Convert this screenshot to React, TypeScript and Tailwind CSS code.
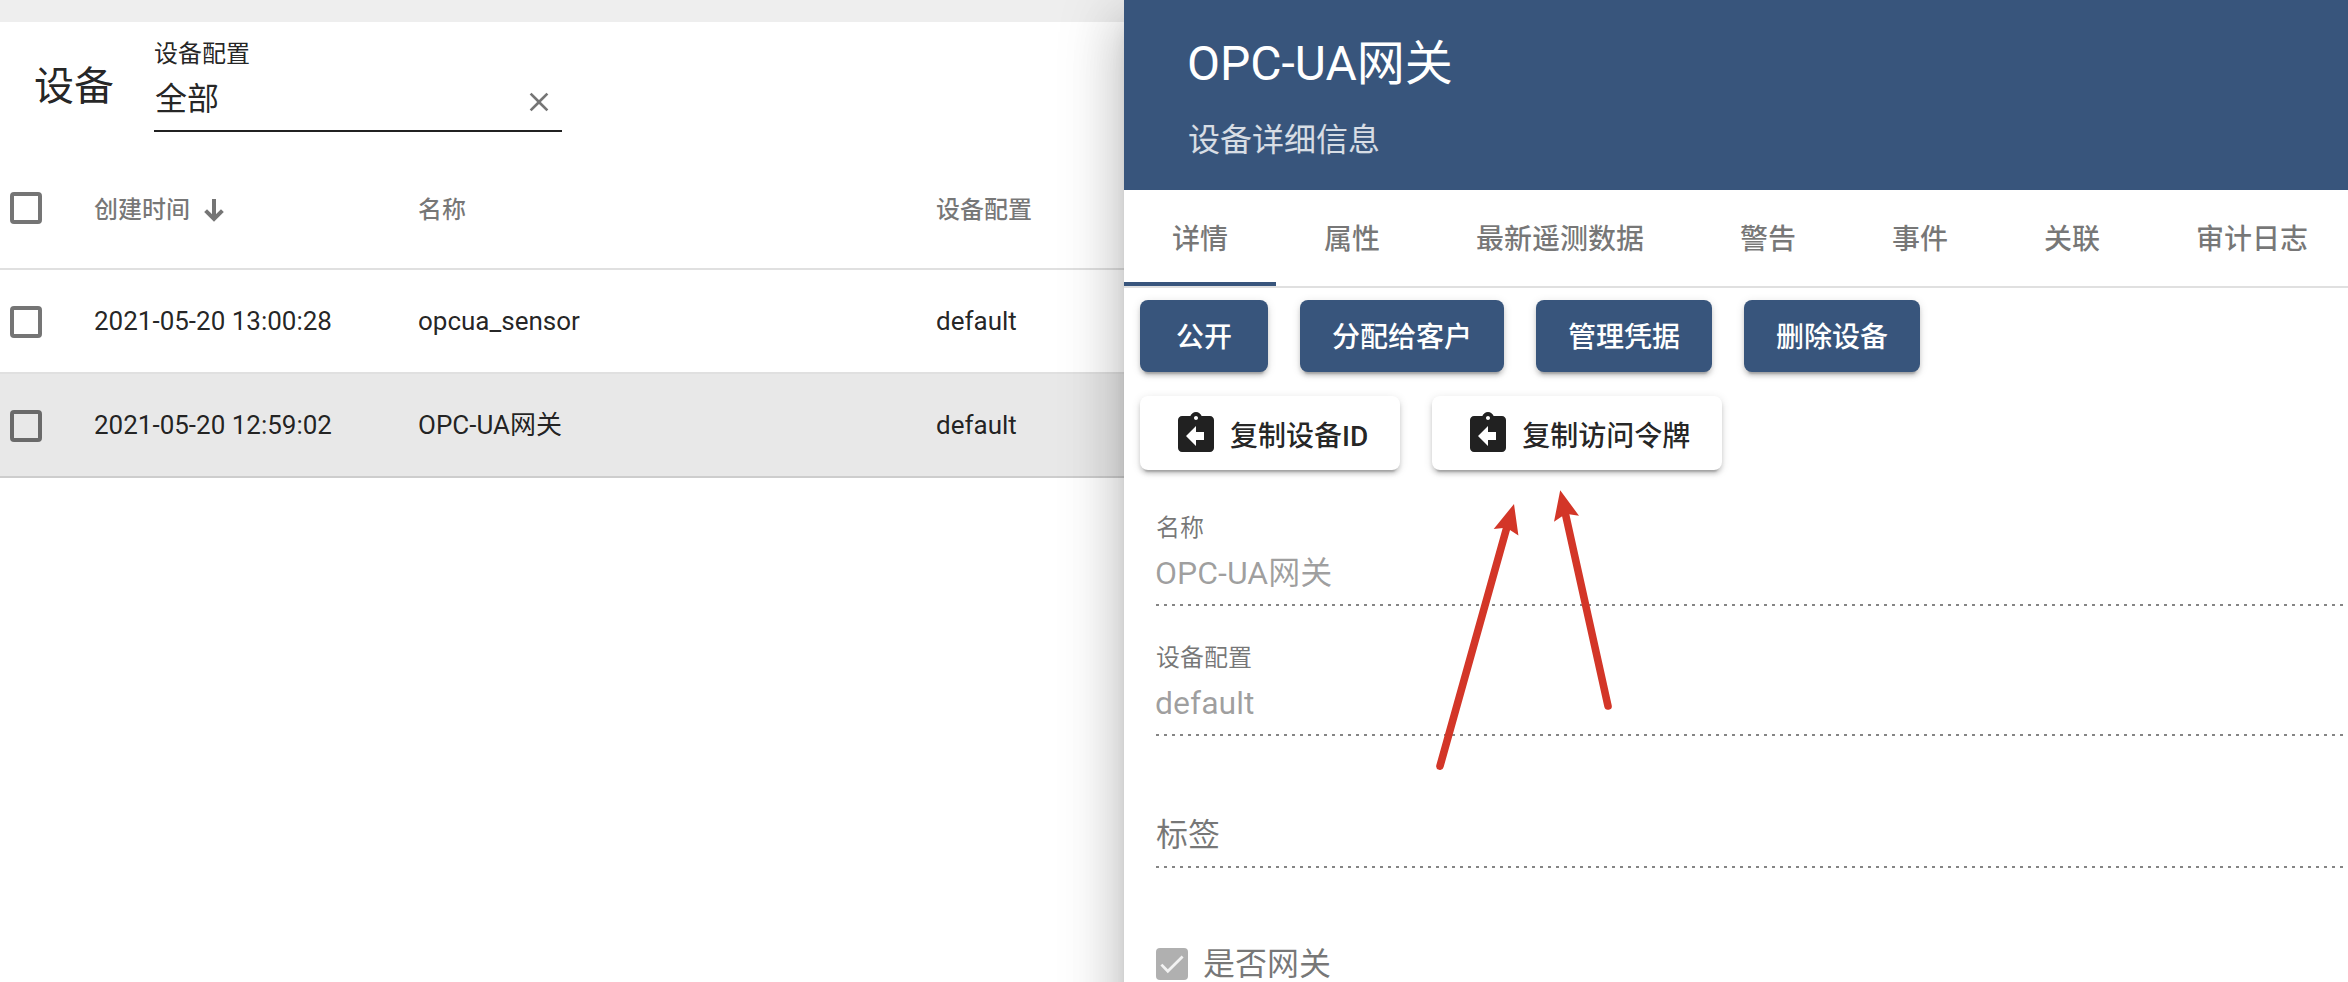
import React from "react";
import { MdAssignmentReturn, MdClose } from "react-icons/md";

type Device = {
  createdTime: string;
  name: string;
  profile: string;
};

const devices: Device[] = [
  { createdTime: "2021-05-20 13:00:28", name: "opcua_sensor", profile: "default" },
  { createdTime: "2021-05-20 12:59:02", name: "OPC-UA网关", profile: "default" },
];

const tabs = ["详情", "属性", "最新遥测数据", "警告", "事件", "关联", "审计日志"];
const actions = ["公开", "分配给客户", "管理凭据", "删除设备"];
const copyActions = ["复制设备ID", "复制访问令牌"];

const Checkbox = () => <div className="size-8 shrink-0 rounded-[4px] border-4 border-black/54" />;

const SortArrow = () => (
  <svg className="ml-[14px] h-6 w-5" viewBox="0 0 20 24" fill="none" stroke="currentColor" strokeWidth="4">
    <path d="M10 1v20M1.6 12.6l8.4 8.4 8.4-8.4" />
  </svg>
);

const DottedLine = () => (
  <div className="h-0.5 w-full bg-[linear-gradient(to_right,rgba(0,0,0,0.48)_0%,rgba(0,0,0,0.48)_33%,transparent_0%)] bg-[length:8px_100%] bg-repeat-x" />
);

const DeviceTable = () => (
  <div className="flex w-[1124px] shrink-0 flex-col bg-white">
    <div className="h-[22px] bg-[#eeeeee]" />

    {/* Toolbar */}
    <div className="flex h-[128px] pl-[34px]">
      <h2 className="h-[128px] w-[120px] text-[40px] leading-[130px]">设备</h2>
      <div className="h-[110px] w-[408px] border-b-2 border-black/87">
        <div className="h-[50px] pt-[14px] text-2xl leading-[37px]">设备配置</div>
        <div className="flex h-[54px] items-center justify-between pr-[7px]">
          <span className="pl-px text-[32px] leading-[54px]">全部</span>
          <MdClose className="mt-1.5 size-8 text-black/54" />
        </div>
      </div>
    </div>

    {/* Header row */}
    <div className="flex h-[120px] items-center border-b-2 border-black/12 pb-[2px] pl-[10px] text-2xl font-medium text-black/54">
      <div className="flex w-[84px]">
        <Checkbox />
      </div>
      <div className="flex w-[324px] items-center pt-[4px]">
        创建时间
        <SortArrow />
      </div>
      <div className="w-[518px] pt-[4px]">名称</div>
      <div className="pt-[4px]">设备配置</div>
    </div>

    {devices.map((device, i) => (
      <div
        key={device.createdTime}
        className={
          i === 1
            ? "flex h-[104px] items-center border-b-2 border-[#cdcdcd] bg-[#e8e8e8] pl-[10px] text-[26px]"
            : "flex h-[104px] items-center border-b-2 border-black/12 pl-[10px] text-[26px]"
        }
      >
        <div className="flex w-[84px] pt-[2px]">
          <Checkbox />
        </div>
        <div className="w-[324px]">{device.createdTime}</div>
        <div className="w-[518px]">{device.name}</div>
        <div>{device.profile}</div>
      </div>
    ))}
  </div>
);

const DetailsPanel = () => (
  <div className="z-10 flex h-[1200px] w-[1224px] shrink-0 flex-col bg-white shadow-[0_16px_20px_-10px_rgba(0,0,0,0.2),0_32px_48px_4px_rgba(0,0,0,0.14),0_12px_60px_10px_rgba(0,0,0,0.12)]">
    <div className="h-[190px] bg-[#38557c] pl-[63px] text-white">
      <h1 className="pt-[32px] text-[48px] leading-[64px]">OPC-UA网关</h1>
      <p className="pt-[20px] pl-px text-[32px] leading-[48px] text-white/80">设备详细信息</p>
    </div>

    {/* Tabs */}
    <div className="flex h-[98px] border-b-2 border-black/12">
      {tabs.map((tab, i) => (
        <div
          key={tab}
          className={
            i === 0
              ? "h-[96px] shrink-0 border-b-4 border-[#38557c] px-12 text-[28px] leading-[99px] font-medium text-black/54"
              : "h-[96px] shrink-0 px-12 text-[28px] leading-[99px] font-medium text-black/54"
          }
        >
          {tab}
        </div>
      ))}
    </div>

    {/* Action buttons */}
    <div className="flex gap-8 px-4 pt-3">
      {actions.map((label) => (
        <button
          key={label}
          className="h-[72px] min-w-[128px] rounded-lg bg-[#38557c] px-8 pt-[3px] text-[28px] leading-[69px] font-medium text-white shadow-[0_6px_2px_-4px_rgba(0,0,0,0.2),0_4px_4px_0_rgba(0,0,0,0.14),0_2px_10px_0_rgba(0,0,0,0.12)]"
        >
          {label}
        </button>
      ))}
    </div>
    <div className="flex gap-8 px-4 pt-6">
      {copyActions.map((label) => (
        <button
          key={label}
          className="flex h-[74px] items-center rounded-lg bg-white px-8 text-[28px] font-medium shadow-[0_6px_2px_-4px_rgba(0,0,0,0.2),0_4px_4px_0_rgba(0,0,0,0.14),0_2px_10px_0_rgba(0,0,0,0.12)]"
        >
          <MdAssignmentReturn className="mr-[10px] mb-[-2px] size-12" />
          <span className="pt-[8px] leading-[66px]">{label}</span>
        </button>
      ))}
    </div>

    {/* Form */}
    <div className="flex flex-col pt-10 pl-[31px] text-[32px] text-black/38">
      <div className="h-[96px]">
        <div className="h-[36px] pl-px text-2xl leading-[36px] text-black/54">名称</div>
        <div className="h-[58px] leading-[54px]">OPC-UA网关</div>
        <div className="pl-px">
          <DottedLine />
        </div>
      </div>
      <div className="h-[130px] pt-[34px]">
        <div className="h-[36px] pl-px text-2xl leading-[36px] text-black/54">设备配置</div>
        <div className="h-[58px] leading-[54px]">default</div>
        <div className="pl-px">
          <DottedLine />
        </div>
      </div>
      <div className="h-[132px] pt-[74px] pl-px">
        <div className="h-[56px] leading-[51px] text-black/54">标签</div>
        <DottedLine />
      </div>
      <div className="mt-20 flex h-8 items-center gap-[15px] pl-px text-black/54">
        <div className="size-8 shrink-0 rounded-[4px] bg-[#b0b0b0]">
          <svg className="size-8" viewBox="0 0 32 32" fill="none" stroke="#f2f2f2" strokeWidth="2.8">
            <path d="M5.4 16.6l6.4 6.6L26.6 8.4" />
          </svg>
        </div>
        <span className="leading-8 whitespace-nowrap">是否网关</span>
      </div>
    </div>
  </div>
);

const Arrows = () => (
  <svg className="absolute top-0 left-0 z-20 h-[982px] w-[2348px]" viewBox="0 0 2348 982" fill="#d33628" stroke="#d33628">
    <path d="M1440 766L1507.5 525" strokeWidth="7.6" strokeLinecap="round" />
    <path d="M1514 504L1518.4 535.6L1510 530L1503.3 528L1493.7 529Z" stroke="none" />
    <path d="M1608 706L1565 512" strokeWidth="7.6" strokeLinecap="round" />
    <path d="M1560.2 490.3L1579 515.7L1569 514.3L1562.5 516L1554 521.7Z" stroke="none" />
  </svg>
);

const App = () => {
  return (
    <div className="relative flex h-[982px] w-[2348px] overflow-hidden bg-white font-[Roboto,'Noto_Sans_CJK_SC',sans-serif] text-black/87">
      <DeviceTable />
      <DetailsPanel />
      <Arrows />
    </div>
  );
};

export default App;
